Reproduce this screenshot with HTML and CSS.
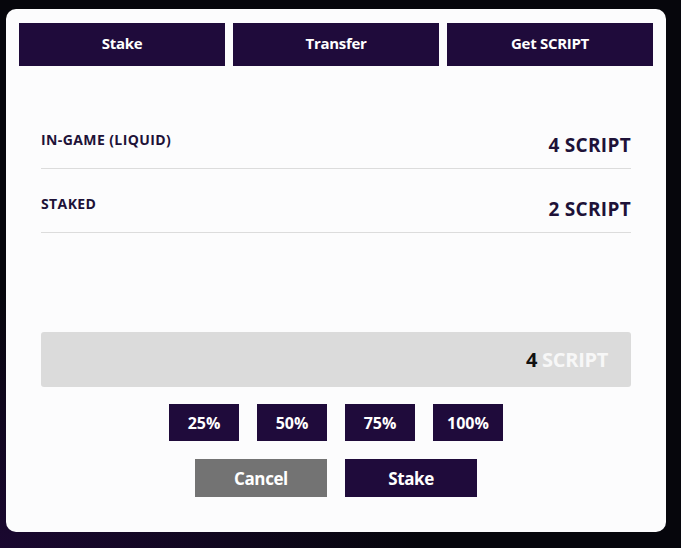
FILE: index.html
```html
<!DOCTYPE html>
<html>
<head>
<meta charset="utf-8">
<link rel="stylesheet" href="styles.css">
</head>
<body>
<div class="card">
  <div class="tabs">
    <div class="tab">Stake</div>
    <div class="tab">Transfer</div>
    <div class="tab">Get SCRIPT</div>
  </div>
  <div class="content">
    <div class="rows">
      <div class="row"><span class="label">IN-GAME (LIQUID)</span><span class="value">4 SCRIPT</span></div>
      <div class="row"><span class="label">STAKED</span><span class="value">2 SCRIPT</span></div>
    </div>
    <div class="amount"><span class="num">4</span><span class="unit">SCRIPT</span></div>
    <div class="percents">
      <div class="pct">25%</div>
      <div class="pct">50%</div>
      <div class="pct">75%</div>
      <div class="pct">100%</div>
    </div>
    <div class="actions">
      <div class="btn cancel">Cancel</div>
      <div class="btn primary">Stake</div>
    </div>
  </div>
</div>
</body>
</html>
```
FILE: styles.css
```css
html, body {
  margin: 0;
  height: 100%;
}
body {
  background:
    radial-gradient(ellipse 420px 260px at 0% 100%, #1a0830 0%, rgba(26,8,48,0.6) 45%, rgba(6,6,12,0) 100%),
    #06060c;
  font-family: "Open Sans", "Liberation Sans", sans-serif;
  padding: 9px 0 0 6px;
  box-sizing: border-box;
  overflow: hidden;
}
.card {
  width: 660px;
  height: 523px;
  background: #fcfcfd;
  border-radius: 10px;
  box-sizing: border-box;
  padding: 14px 13px;
}
.tabs {
  display: flex;
  gap: 8px;
}
.tab {
  flex: 1;
  height: 43px;
  box-sizing: border-box;
  padding-bottom: 3px;
  background: #1f0b3b;
  color: #ffffff;
  font-weight: 700;
  font-size: 15px;
  display: flex;
  align-items: center;
  justify-content: center;
  letter-spacing: -0.3px;
}
.content {
  padding: 0 22px;
}
.rows {
  margin-top: 39px;
}
.row {
  height: 63px;
  box-sizing: content-box;
  border-bottom: 1px solid #dcdcdc;
  display: flex;
  justify-content: space-between;
  align-items: flex-start;
}
.label {
  margin-top: 26px;
  line-height: 18px;
  font-size: 14px;
  font-weight: 700;
  color: #1e1238;
  letter-spacing: 0.4px;
}
.value {
  margin-top: 28px;
  line-height: 24px;
  font-size: 19px;
  font-weight: 700;
  color: #1e1238;
  letter-spacing: 0.3px;
}
.amount {
  margin-top: 99px;
  height: 55px;
  background: #dbdbdb;
  border-radius: 3px;
  display: flex;
  align-items: center;
  justify-content: flex-end;
  padding-right: 23px;
  font-size: 20px;
  font-weight: 700;
  letter-spacing: -0.3px;
}
.num {
  color: #111111;
  margin-right: 5px;
}
.unit {
  color: #f7f7f7;
}
.percents {
  margin-top: 17px;
  display: flex;
  justify-content: center;
  gap: 18px;
}
.pct {
  width: 70px;
  height: 37px;
  background: #1f0b3b;
  color: #fff;
  font-weight: 700;
  font-size: 16px;
  display: flex;
  align-items: center;
  justify-content: center;
  letter-spacing: 0;
}
.actions {
  margin-top: 18px;
  display: flex;
  justify-content: center;
  gap: 18px;
}
.btn {
  width: 132px;
  height: 38px;
  color: #fff;
  font-weight: 700;
  font-size: 17px;
  display: flex;
  align-items: center;
  justify-content: center;
  letter-spacing: -0.4px;
}
.cancel {
  background: #737373;
}
.primary {
  background: #1f0b3b;
}
```
